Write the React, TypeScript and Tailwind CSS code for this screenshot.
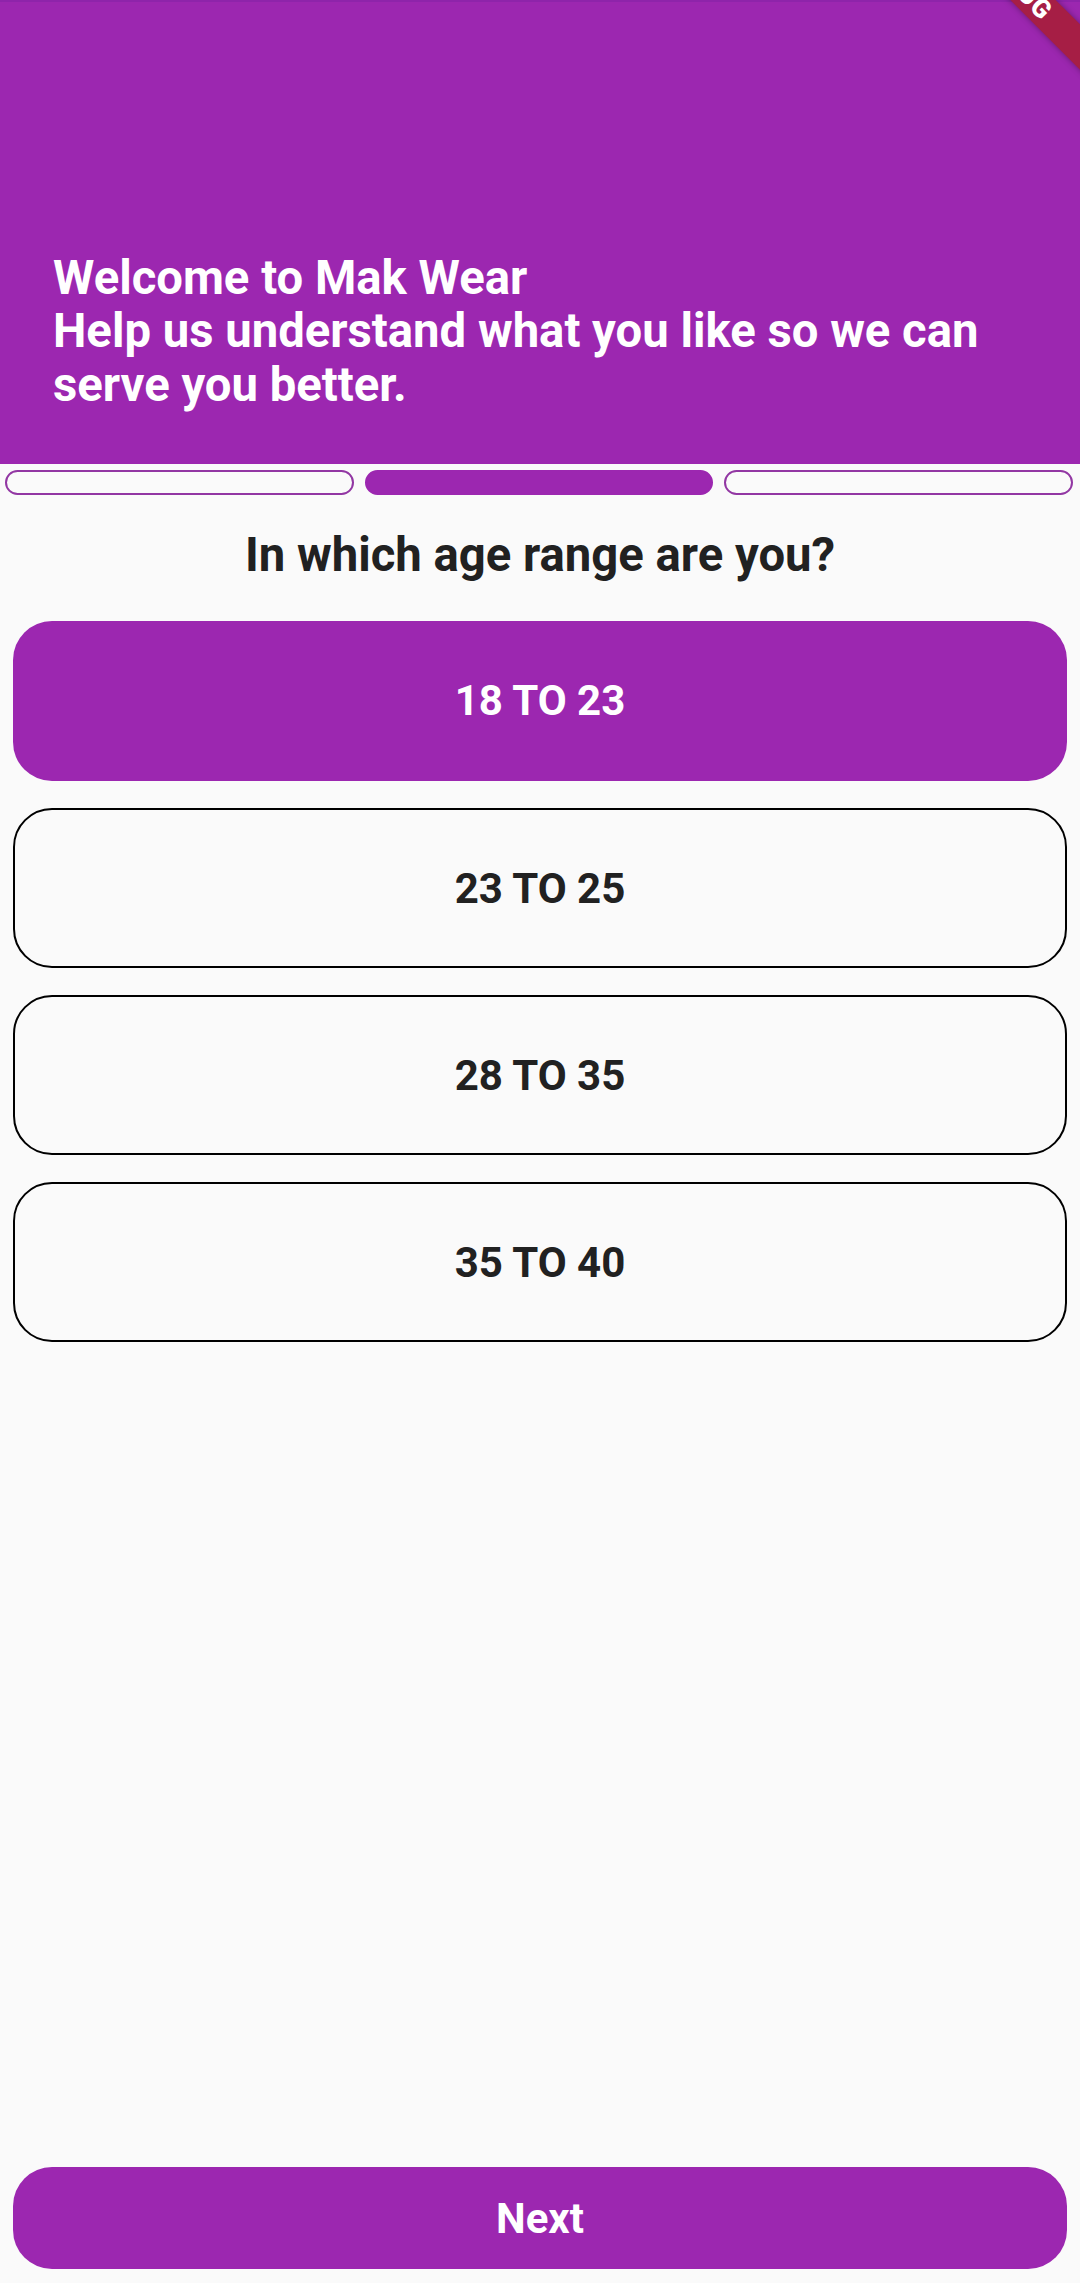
const options = ["18 TO 23", "23 TO 25", "28 TO 35", "35 TO 40"];

export default function App() {
  const selected = 0;
  const step = 1;

  return (
    <div
      className="relative flex h-[2283px] w-[1080px] flex-col overflow-hidden bg-[#fafafa]"
      style={{ fontFamily: "Roboto, 'Noto Sans', sans-serif" }}
    >
      {/* header */}
      <div className="flex h-[464px] flex-col justify-end border-t-2 border-[#8e24aa] bg-[#9c27b0] pb-[52px] pl-[53px] pr-[50px]">
        <p className="text-[47.25px] font-bold leading-[53.5px] text-white">
          Welcome to Mak Wear
          <br />
          Help us understand what you like so we can serve you better.
        </p>
      </div>

      {/* progress */}
      <div className="mt-[6px] flex gap-[11px] pl-[5px] pr-[7px]">
        {[0, 1, 2].map((i) => (
          <div
            key={i}
            className={
              i === step
                ? "h-[25px] flex-1 rounded-full border-2 border-[#9c27b0] bg-[#9c27b0]"
                : "h-[25px] flex-1 rounded-full border-[2.5px] border-[#9237a3] bg-[#fafafa]"
            }
          />
        ))}
      </div>

      <h1 className="mt-[33px] text-center text-[47.25px] font-bold leading-[55px] text-[#212121]">
        In which age range are you?
      </h1>

      <div className="mt-[38px] flex flex-col gap-[27px] px-[13px]">
        {options.map((o, i) => (
          <button
            key={o}
            className={
              i === selected
                ? "flex h-[160px] items-center justify-center rounded-[39px] bg-[#9c27b0] pb-[2px] text-[42px] font-bold text-white"
                : "flex h-[160px] items-center justify-center rounded-[39px] border-2 border-black bg-[#fafafa] text-[42px] font-bold text-[#212121]"
            }
          >
            {o}
          </button>
        ))}
      </div>

      <div className="flex-1" />

      <button className="mx-[13px] mb-[14px] flex h-[102px] items-center justify-center rounded-[39px] bg-[#9c27b0] text-[42px] font-bold text-white">
        Next
      </button>

      {/* debug ribbon */}
      <div className="pointer-events-none absolute left-[817px] top-[-32px] flex h-[32px] w-[400px] rotate-45 items-center justify-center bg-[#a61e45] shadow-[0_0_6px_rgba(0,0,0,0.35)]">
        <span className="text-[26px] font-black tracking-[1px] text-white">DEBUG</span>
      </div>
    </div>
  );
}
